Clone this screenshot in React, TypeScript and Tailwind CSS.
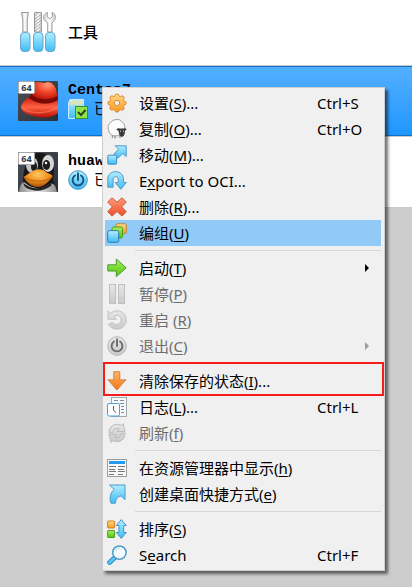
import React from "react";

const Defs = () => (
  <svg width="0" height="0" className="absolute" aria-hidden="true">
    <defs>
      <linearGradient id="blue" x1="0" y1="0" x2="0" y2="1">
        <stop offset="0" stopColor="#b2eefe" />
        <stop offset="1" stopColor="#3ebcf7" />
      </linearGradient>
      <linearGradient id="orange" x1="0" y1="0" x2="0" y2="1">
        <stop offset="0" stopColor="#ffd884" />
        <stop offset="1" stopColor="#fb9a22" />
      </linearGradient>
      <linearGradient id="flame" x1="0" y1="0" x2="0" y2="1">
        <stop offset="0" stopColor="#ffb766" />
        <stop offset="1" stopColor="#f47416" />
      </linearGradient>
      <linearGradient id="red" x1="0" y1="0" x2="0" y2="1">
        <stop offset="0" stopColor="#ff9b78" />
        <stop offset="1" stopColor="#ee4f2b" />
      </linearGradient>
      <linearGradient id="green" x1="0" y1="0" x2="0" y2="1">
        <stop offset="0" stopColor="#a8f060" />
        <stop offset="1" stopColor="#4fc70c" />
      </linearGradient>
      <linearGradient id="grey" x1="0" y1="0" x2="0" y2="1">
        <stop offset="0" stopColor="#e6e6e6" />
        <stop offset="1" stopColor="#cacaca" />
      </linearGradient>
      <linearGradient id="steel" x1="0" y1="0" x2="1" y2="0">
        <stop offset="0" stopColor="#d4d4d4" />
        <stop offset="0.5" stopColor="#ffffff" />
        <stop offset="1" stopColor="#d0d0d0" />
      </linearGradient>
      <linearGradient id="slate" x1="0" y1="0" x2="1" y2="1">
        <stop offset="0" stopColor="#4b5059" />
        <stop offset="1" stopColor="#2b2f37" />
      </linearGradient>
      <radialGradient id="crown" cx="0.6" cy="0.15" r="0.8">
        <stop offset="0" stopColor="#ff9a78" />
        <stop offset="0.45" stopColor="#f2492b" />
        <stop offset="1" stopColor="#b81008" />
      </radialGradient>
      <linearGradient id="brim" x1="0" y1="0" x2="0" y2="1">
        <stop offset="0" stopColor="#c81a0e" />
        <stop offset="0.5" stopColor="#ff6243" />
        <stop offset="1" stopColor="#b90d08" />
      </linearGradient>
      <linearGradient id="belly" x1="0" y1="0" x2="1" y2="0">
        <stop offset="0" stopColor="#8c8c8c" />
        <stop offset="0.5" stopColor="#f0f0f0" />
        <stop offset="1" stopColor="#8a8a8a" />
      </linearGradient>
      <radialGradient id="beak" cx="0.5" cy="0.3" r="0.65">
        <stop offset="0" stopColor="#ffc869" />
        <stop offset="0.6" stopColor="#f0901c" />
        <stop offset="1" stopColor="#b05708" />
      </radialGradient>
    </defs>
  </svg>
);

const Icon = ({ children }: { children: React.ReactNode }) => (
  <svg viewBox="0 0 20 20" className="size-5 shrink-0" aria-hidden="true">
    {children}
  </svg>
);

const GearIcon = () => (
  <Icon>
    <path
      d="M8.2 1.6Q10 .2 11.8 1.6L12.2 3.3 13.2 3.7 15 2.8Q17.3 3 17.2 5.2L16.2 6.8 16.7 7.8 18.5 8.2Q19.9 10 18.5 11.8L16.7 12.2 16.2 13.2 17.2 15Q17 17.3 14.8 17.2L13.2 16.3 12.2 16.7 11.8 18.5Q10 19.8 8.2 18.5L7.8 16.7 6.8 16.3 5 17.2Q2.7 17 2.8 14.8L3.8 13.2 3.3 12.2 1.5 11.8Q.1 10 1.5 8.2L3.3 7.8 3.8 6.8 2.8 5Q3 2.7 5.2 2.8L6.8 3.7 7.8 3.3Z"
      fill="url(#orange)"
      stroke="#e18a3a"
    />
    <circle cx="10" cy="10" r="2.7" fill="#efefef" stroke="#e18a3a" />
  </Icon>
);

const SheepIcon = () => (
  <Icon>
    <path d="M5.5 15V19M8 16V19.5M13 16V19" stroke="#999" strokeWidth="1.4" />
    <path
      d="M8 .8C11-.1 14 .8 15.3 3.2 18 4.5 18 8 17.6 11 16.6 15.6 13 17 9 16.8 5 17.2 2.2 14.8 1.8 11.5.2 8 1.7 4.5 4 3.2 5 1.5 6.5.9 8 .8Z"
      fill="#fcfcfc"
      stroke="#9a9a9a"
    />
    <path
      d="M9.2 10.3Q11 9 13 9.5H16.5Q18.5 9 19.7 10.3L17.9 12C17.9 15 17 17.8 14.9 17.8 12.8 17.8 11.8 15 11.5 12Z"
      fill="#3a3a3a"
    />
    <path d="M13 12.2H14M16 12.2H17" stroke="#eee" />
  </Icon>
);

const MoveIcon = () => (
  <Icon>
    <path
      d="M8.2.8H19.2V11.5L15.7 8.5 11 13.2 6.8 9 11.7 4.3Z"
      fill="url(#blue)"
      stroke="#4f99c9"
    />
    <rect x=".8" y="10.2" width="8.8" height="9" rx="1" fill="url(#blue)" stroke="#3d8ebc" />
  </Icon>
);

const ExportIcon = () => (
  <Icon>
    <path
      d="M.8 16.2V8C.8 3.5 4.2.7 8.7.7S16.4 3.7 16.4 8V11.5H19.3L13.8 18.3 8.2 11.5H11.2V8C11.2 6.5 10.2 5.7 8.7 5.7S6.1 6.5 6.1 8V16.2Z"
      fill="url(#blue)"
      stroke="#4f99c9"
    />
  </Icon>
);

const CrossIcon = () => (
  <Icon>
    <path
      d="M5 .8 10 5.2 15 .8 19.3 5 14.7 9.8 19.3 14.8 15 19.1 10 14.6 5 19.1 .7 14.8 5.3 9.8 .7 5Z"
      fill="url(#red)"
      stroke="#c95a3c"
      strokeLinejoin="round"
    />
  </Icon>
);

const GroupIcon = () => (
  <Icon>
    <rect x="9" y=".7" width="10.3" height="10" rx="1.6" fill="url(#orange)" stroke="#bd8640" />
    <rect x="5" y="4" width="10.5" height="11" rx="1.6" fill="url(#green)" stroke="#4e9924" />
    <rect x=".7" y="7.6" width="11" height="11.7" rx="1.6" fill="url(#blue)" stroke="#337ca6" />
  </Icon>
);

const StartIcon = () => (
  <Icon>
    <path
      d="M.8 6.8H9.3V1L19.2 9.8 9.3 18.7V13H.8Z"
      fill="url(#green)"
      stroke="#4b9931"
      strokeLinejoin="round"
    />
  </Icon>
);

const PauseIcon = () => (
  <Icon>
    <rect x="2.5" y=".5" width="6" height="19" fill="url(#grey)" stroke="#c0c0c0" />
    <rect x="11.5" y=".5" width="6" height="19" fill="url(#grey)" stroke="#c0c0c0" />
  </Icon>
);

const ResetIcon = () => (
  <Icon>
    <path
      d="M1 1V9.3H9.5L6.8 6.5C9.7 3.8 14.2 6 14 10 13.8 14.8 8.5 16 5.2 12.4L1.4 14.2C4.6 20 12.5 20.8 16.7 16.2 20.6 11.8 19.8 5.8 15.5 2.6 11.8-.1 7 .3 3.7 3.4Z"
      fill="url(#grey)"
      stroke="#c2c2c2"
    />
  </Icon>
);

const PowerGreyIcon = () => (
  <Icon>
    <circle cx="10" cy="10" r="9.3" fill="url(#grey)" stroke="#b7b7b7" />
    <path
      d="M7 5.5A5.4 5.4 0 1 0 13 5.5M10 3.2V10"
      fill="none"
      stroke="#6c6c6c"
      strokeWidth="1.9"
      strokeLinecap="round"
    />
  </Icon>
);

const DiscardIcon = () => (
  <Icon>
    <path
      d="M6.8 .8H12.8V9L18.9 8.8 9.9 19 1 8.8 6.8 9Z"
      fill="url(#flame)"
      stroke="#d68040"
      strokeLinejoin="round"
    />
  </Icon>
);

const LogIcon = () => (
  <Icon>
    <rect x="4.5" y=".5" width="15" height="19" fill="#f7f8fa" stroke="#a3a9b0" />
    <path d="M7 3.5H11M13 3.5H17M13 6.5H17M14 9.5H17M14 12.5H17M14 15.5H17" stroke="#848d97" />
    <rect x=".5" y="6.5" width="12" height="12.5" rx="1.5" fill="#fff" stroke="#4aa3dc" />
    <path d="M6.5 9V13L9 15.8" fill="none" stroke="#3a6282" />
  </Icon>
);

const RefreshIcon = () => (
  <Icon>
    <circle cx="10" cy="10" r="8.8" fill="url(#grey)" />
    <path
      d="M2.3 9.5C1.6 4 8-.9 13.8 2.3L16.3.8 17.7 8.5H10L12.2 5.8C9 4.8 6.2 6.6 5.8 9.5ZM17.7 10.5C18.4 16 12 20.9 6.2 17.7L3.7 19.2 2.3 11.5H10L7.8 14.2C11 15.2 13.8 13.4 14.2 10.5Z"
      fill="url(#grey)"
      stroke="#bcbcbc"
    />
  </Icon>
);

const ExplorerIcon = () => (
  <Icon>
    <rect x=".5" y="1.5" width="19" height="17" fill="#f8f8f8" stroke="#9b9b9b" />
    <path d="M2 4.5H18" stroke="#249bf2" strokeWidth="3" />
    <path
      d="M2 8.5H9M2 11.5H8M2 13.5H9M2 16.5H7M11 8.5H18M11 11.5H17M11 13.5H18M11 16.5H16"
      stroke="#777"
    />
  </Icon>
);

const ShortcutIcon = () => (
  <Icon>
    <path
      d="M2.5 1H18V15.5L14.2 12C10.5 12.2 9 15 8.3 19.2H4C2 14 3.5 8.2 7.2 5.5Z"
      fill="url(#blue)"
      stroke="#4f99c9"
      strokeLinejoin="round"
    />
  </Icon>
);

const SortIcon = () => (
  <Icon>
    <rect x=".6" y="2" width="7" height="7" rx=".6" fill="url(#orange)" stroke="#cf8229" />
    <rect x=".6" y="11.5" width="7" height="7" rx=".6" fill="url(#green)" stroke="#519b28" />
    <path
      d="M14.3.6 19.3 6.5H16.7V13.5H19.3L14.3 19.4 9.3 13.5H11.9V6.5H9.3Z"
      fill="url(#blue)"
      stroke="#4594c4"
      strokeLinejoin="round"
    />
  </Icon>
);

const SearchIcon = () => (
  <Icon>
    <path d="M7.8 12.5 2.6 17.4" stroke="#3183b5" strokeWidth="4.8" strokeLinecap="round" />
    <path d="M7.8 12.5 2.6 17.4" stroke="#57c6f8" strokeWidth="3" strokeLinecap="round" />
    <circle cx="12.4" cy="7.6" r="6.7" fill="#f3fbfe" stroke="#4b9cc7" strokeWidth="1.5" />
    <path d="M8.5 7A4.2 4.2 0 0 1 13 3.2" stroke="#bde8fa" strokeWidth="1.4" fill="none" />
  </Icon>
);

const ToolsIcon = () => (
  <svg viewBox="0 0 38 42" className="h-[42px] w-[38px] shrink-0" aria-hidden="true">
    <g stroke="#9b9b9b" fill="url(#steel)">
      <path d="M1.5.5H8.5L7.3 8V20H2.8V8Z" />
      <path d="M14.5.5H21.5V20H14.5Z" />
      <path d="M27.500 .5C23.8 1.500 22.8 5 24.2 7.8 25 9.2 27.500 10.200 27.700 11.200V20H32V11.200C32.500 10 34 9 34.800 7.500 36.200 4.500 34.800 1.200 32 .5L32.500 4.500 29.800 6.800 27 4.500Z" />
    </g>
    <path
      d="M15 4 18.500 1M15 7 21 2.500M15 10 21 5.500M15 13 21 8.500M15 16 21 11.500M15 19 21 14.500M18 20 21 17.500"
      stroke="#aaa"
    />
    <g fill="url(#blue)" stroke="#6ba7cb">
      <rect x=".5" y="20.500" width="9.500" height="19" rx="3.500" />
      <rect x="13.500" y="20.500" width="9.500" height="19" rx="3.500" />
      <rect x="25.500" y="20.500" width="9.500" height="19" rx="3.500" />
    </g>
  </svg>
);

const Badge64 = () => (
  <>
    <rect x=".5" y=".5" width="16" height="12" rx="1" fill="#fff" stroke="#a9a9a9" />
    <text
      x="8.5"
      y="10"
      textAnchor="middle"
      fontSize="9"
      fontWeight="700"
      fontFamily="'Open Sans', sans-serif"
      fill="#333b45"
    >
      64
    </text>
  </>
);

const HatIcon = () => (
  <svg viewBox="0 0 40 40" className="size-10 shrink-0" aria-hidden="true">
    <rect width="40" height="40" rx="1" fill="url(#slate)" />
    <path
      d="M12 16C7 18 4 22 3 26 3 31 13 36 25 36.5 31 36.5 36 35 40 32V18L28 22Z"
      fill="url(#brim)"
    />
    <path d="M13 15C14 8 14 3 18 1.5 22 0 25 3 28 1.5 32 0 36 3 38 8L40 18Q26 24 13 15Z" fill="url(#crown)" />
    <path d="M13 13C19 19 30 20 39.5 15L40 19C30 25 18 23 11 17Z" fill="#7a0a05" />
    <path d="M5 27C12 33 28 34 40 26" fill="none" stroke="#ff8061" strokeWidth="1.4" opacity=".6" />
    <Badge64 />
  </svg>
);

const PenguinIcon = () => (
  <svg viewBox="0 0 40 40" className="size-10 shrink-0" aria-hidden="true">
    <rect width="40" height="40" rx="1" fill="url(#slate)" />
    <path d="M5 33C5 18 8 2 21 1 35 0 38 14 35 28L40 40H2Z" fill="#171717" />
    <path d="M1 40Q2 31 6 30 20 42 33 31 38 32 39 40Z" fill="url(#belly)" />
    <path d="M5 31Q20 42 34 30L33 34Q20 43 7 35Z" fill="#222" />
    <ellipse cx="14" cy="13" rx="6" ry="8" fill="#c4c4c4" />
    <ellipse cx="30" cy="11.5" rx="6" ry="8.5" fill="#d6d6d6" />
    <ellipse cx="28.500" cy="13" rx="3.600" ry="5" fill="#1c1c1c" />
    <ellipse cx="16" cy="14.500" rx="3" ry="4.500" fill="#1c1c1c" />
    <circle cx="28" cy="11" r="1.200" fill="#fff" />
    <path
      d="M5.500 25C9 23 13 19 17 18 21 16.500 26 17.500 28 20 31 22 35 22 34.500 25 31 29 26 35 20 35 13 35 8 29 5.500 25Z"
      fill="url(#beak)"
    />
    <path d="M6 25C13 30 27 31 34 25" stroke="#a3560f" strokeWidth=".8" fill="none" />
    <Badge64 />
  </svg>
);

const SavedIcon = () => (
  <Icon>
    <path d="M2 .6H15.4V19.4H.6V4Z" fill="url(#blue)" stroke="#d4f1ff" />
    <path d="M3.5 1.5V6M6.5 1.5V6M9.5 1.5V6M12.5 1.5V6" stroke="#fce39a" strokeWidth="2" />
    <rect x="7.5" y="7.5" width="12" height="12" fill="#8ee34a" stroke="#3d9023" />
    <path d="M10 13 13 16 17.500 11" stroke="#27451f" strokeWidth="2" fill="none" />
  </Icon>
);

const PowerBlueIcon = () => (
  <Icon>
    <circle cx="10" cy="10" r="9.3" fill="url(#blue)" stroke="#3a8fc2" />
    <path
      d="M7 5.5A5.4 5.4 0 1 0 13 5.5M10 3.2V10"
      fill="none"
      stroke="#1b5582"
      strokeWidth="2"
      strokeLinecap="round"
    />
  </Icon>
);

type Item = {
  icon: React.ReactNode;
  text: string;
  hot?: string;
  tail?: string;
  keys?: string;
  disabled?: boolean;
  submenu?: boolean;
  active?: boolean;
  marked?: boolean;
};

const groups: Item[][] = [
  [
    { icon: <GearIcon />, text: "设置(", hot: "S", tail: ")...", keys: "Ctrl+S" },
    { icon: <SheepIcon />, text: "复制(", hot: "O", tail: ")...", keys: "Ctrl+O" },
    { icon: <MoveIcon />, text: "移动(", hot: "M", tail: ")..." },
    { icon: <ExportIcon />, text: "E", hot: "x", tail: "port to OCI..." },
    { icon: <CrossIcon />, text: "删除(", hot: "R", tail: ")..." },
    { icon: <GroupIcon />, text: "编组(", hot: "U", tail: ")", active: true },
  ],
  [
    { icon: <StartIcon />, text: "启动(", hot: "T", tail: ")", submenu: true },
    { icon: <PauseIcon />, text: "暂停(", hot: "P", tail: ")", disabled: true },
    { icon: <ResetIcon />, text: "重启 (", hot: "R", tail: ")", disabled: true },
    { icon: <PowerGreyIcon />, text: "退出(", hot: "C", tail: ")", disabled: true, submenu: true },
  ],
  [
    { icon: <DiscardIcon />, text: "清除保存的状态(", hot: "I", tail: ")...", marked: true },
    { icon: <LogIcon />, text: "日志(", hot: "L", tail: ")...", keys: "Ctrl+L" },
    { icon: <RefreshIcon />, text: "刷新(", hot: "f", tail: ")", disabled: true },
  ],
  [
    { icon: <ExplorerIcon />, text: "在资源管理器中显示(", hot: "h", tail: ")" },
    { icon: <ShortcutIcon />, text: "创建桌面快捷方式(", hot: "e", tail: ")" },
  ],
  [
    { icon: <SortIcon />, text: "排序(", hot: "S", tail: ")" },
    { icon: <SearchIcon />, text: "S", hot: "e", tail: "arch", keys: "Ctrl+F" },
  ],
];

const MenuRow = ({ item }: { item: Item }) => (
  <button
    type="button"
    role="menuitem"
    disabled={item.disabled}
    className={`relative flex h-[26px] w-full items-center gap-3 pl-0.5 text-left whitespace-nowrap ${
      item.active ? "bg-[#91c9f7]" : ""
    } ${item.disabled ? "text-[#6d6d6d]" : "text-black"}`}
  >
    {item.icon}
    <span className="flex-1">
      {item.text}
      <span className="underline underline-offset-2">{item.hot}</span>
      {item.tail}
    </span>
    {item.keys && <span className="w-16 shrink-0">{item.keys}</span>}
    {item.submenu && (
      <svg viewBox="0 0 4 8" className="mr-3 h-2 w-1" aria-hidden="true">
        <path d="M0 0 4 4 0 8Z" fill={item.disabled ? "#9d9d9d" : "#000"} />
      </svg>
    )}
    {item.marked && (
      <span className="pointer-events-none absolute -top-1.5 -right-[3px] -bottom-0.5 -left-0.5 border-2 border-[#f41c1c]" />
    )}
  </button>
);

const Menu = () => (
  <div
    role="menu"
    className="absolute top-[87px] right-[27px] left-[102px] border border-[#cfcfcf] bg-[#f0f0f0] py-0.5 pr-[3px] pl-0.5 font-['Noto_Sans','Noto_Sans_CJK_SC',sans-serif] text-[15px] leading-5 shadow-[3px_3px_3px_rgba(0,0,0,0.55)]"
  >
    {groups.map((group, i) => (
      <React.Fragment key={i}>
        {i > 0 && (
          <div role="separator" className="flex h-[9px] items-center pl-[30px]">
            <div className="h-px w-full bg-[#d7d7d7]" />
          </div>
        )}
        {group.map((item) => (
          <MenuRow key={item.text + item.hot} item={item} />
        ))}
      </React.Fragment>
    ))}
  </div>
);

const Machine = ({
  icon,
  name,
  stateIcon,
  state,
}: {
  icon: React.ReactNode;
  name: string;
  stateIcon: React.ReactNode;
  state: string;
}) => (
  <>
    {icon}
    <div className="flex flex-col">
      <span className="font-['Liberation_Mono','Noto_Sans_CJK_SC',monospace] text-[15px] leading-4 font-bold">
        {name}
      </span>
      <span className="flex h-5 items-center gap-1.5 text-[15px] leading-5">
        {stateIcon}
        {state}
      </span>
    </div>
  </>
);

export default function App() {
  return (
    <main className="relative min-h-screen overflow-hidden bg-[#cdcdcd] font-['Liberation_Sans','Noto_Sans_CJK_SC',sans-serif] text-black">
      <Defs />
      <section className="flex h-[66px] items-center gap-2.5 border-b border-[#c9c9c9] bg-white pl-5">
        <ToolsIcon />
        <h1 className="text-[15px] leading-5 font-medium">工具</h1>
      </section>
      <section className="flex h-[70px] items-center gap-2.5 border-y border-[#0f6fc4] bg-linear-to-b from-[#52afff] to-[#1c97ff] pl-[18px]">
        <Machine icon={<HatIcon />} name="Centos7" stateIcon={<SavedIcon />} state="已保存" />
      </section>
      <section className="flex h-[72px] items-center gap-2.5 border-y border-[#c9c9c9] bg-white pl-[18px]">
        <Machine icon={<PenguinIcon />} name="huawei" stateIcon={<PowerBlueIcon />} state="已关闭" />
      </section>
      <Menu />
    </main>
  );
}
